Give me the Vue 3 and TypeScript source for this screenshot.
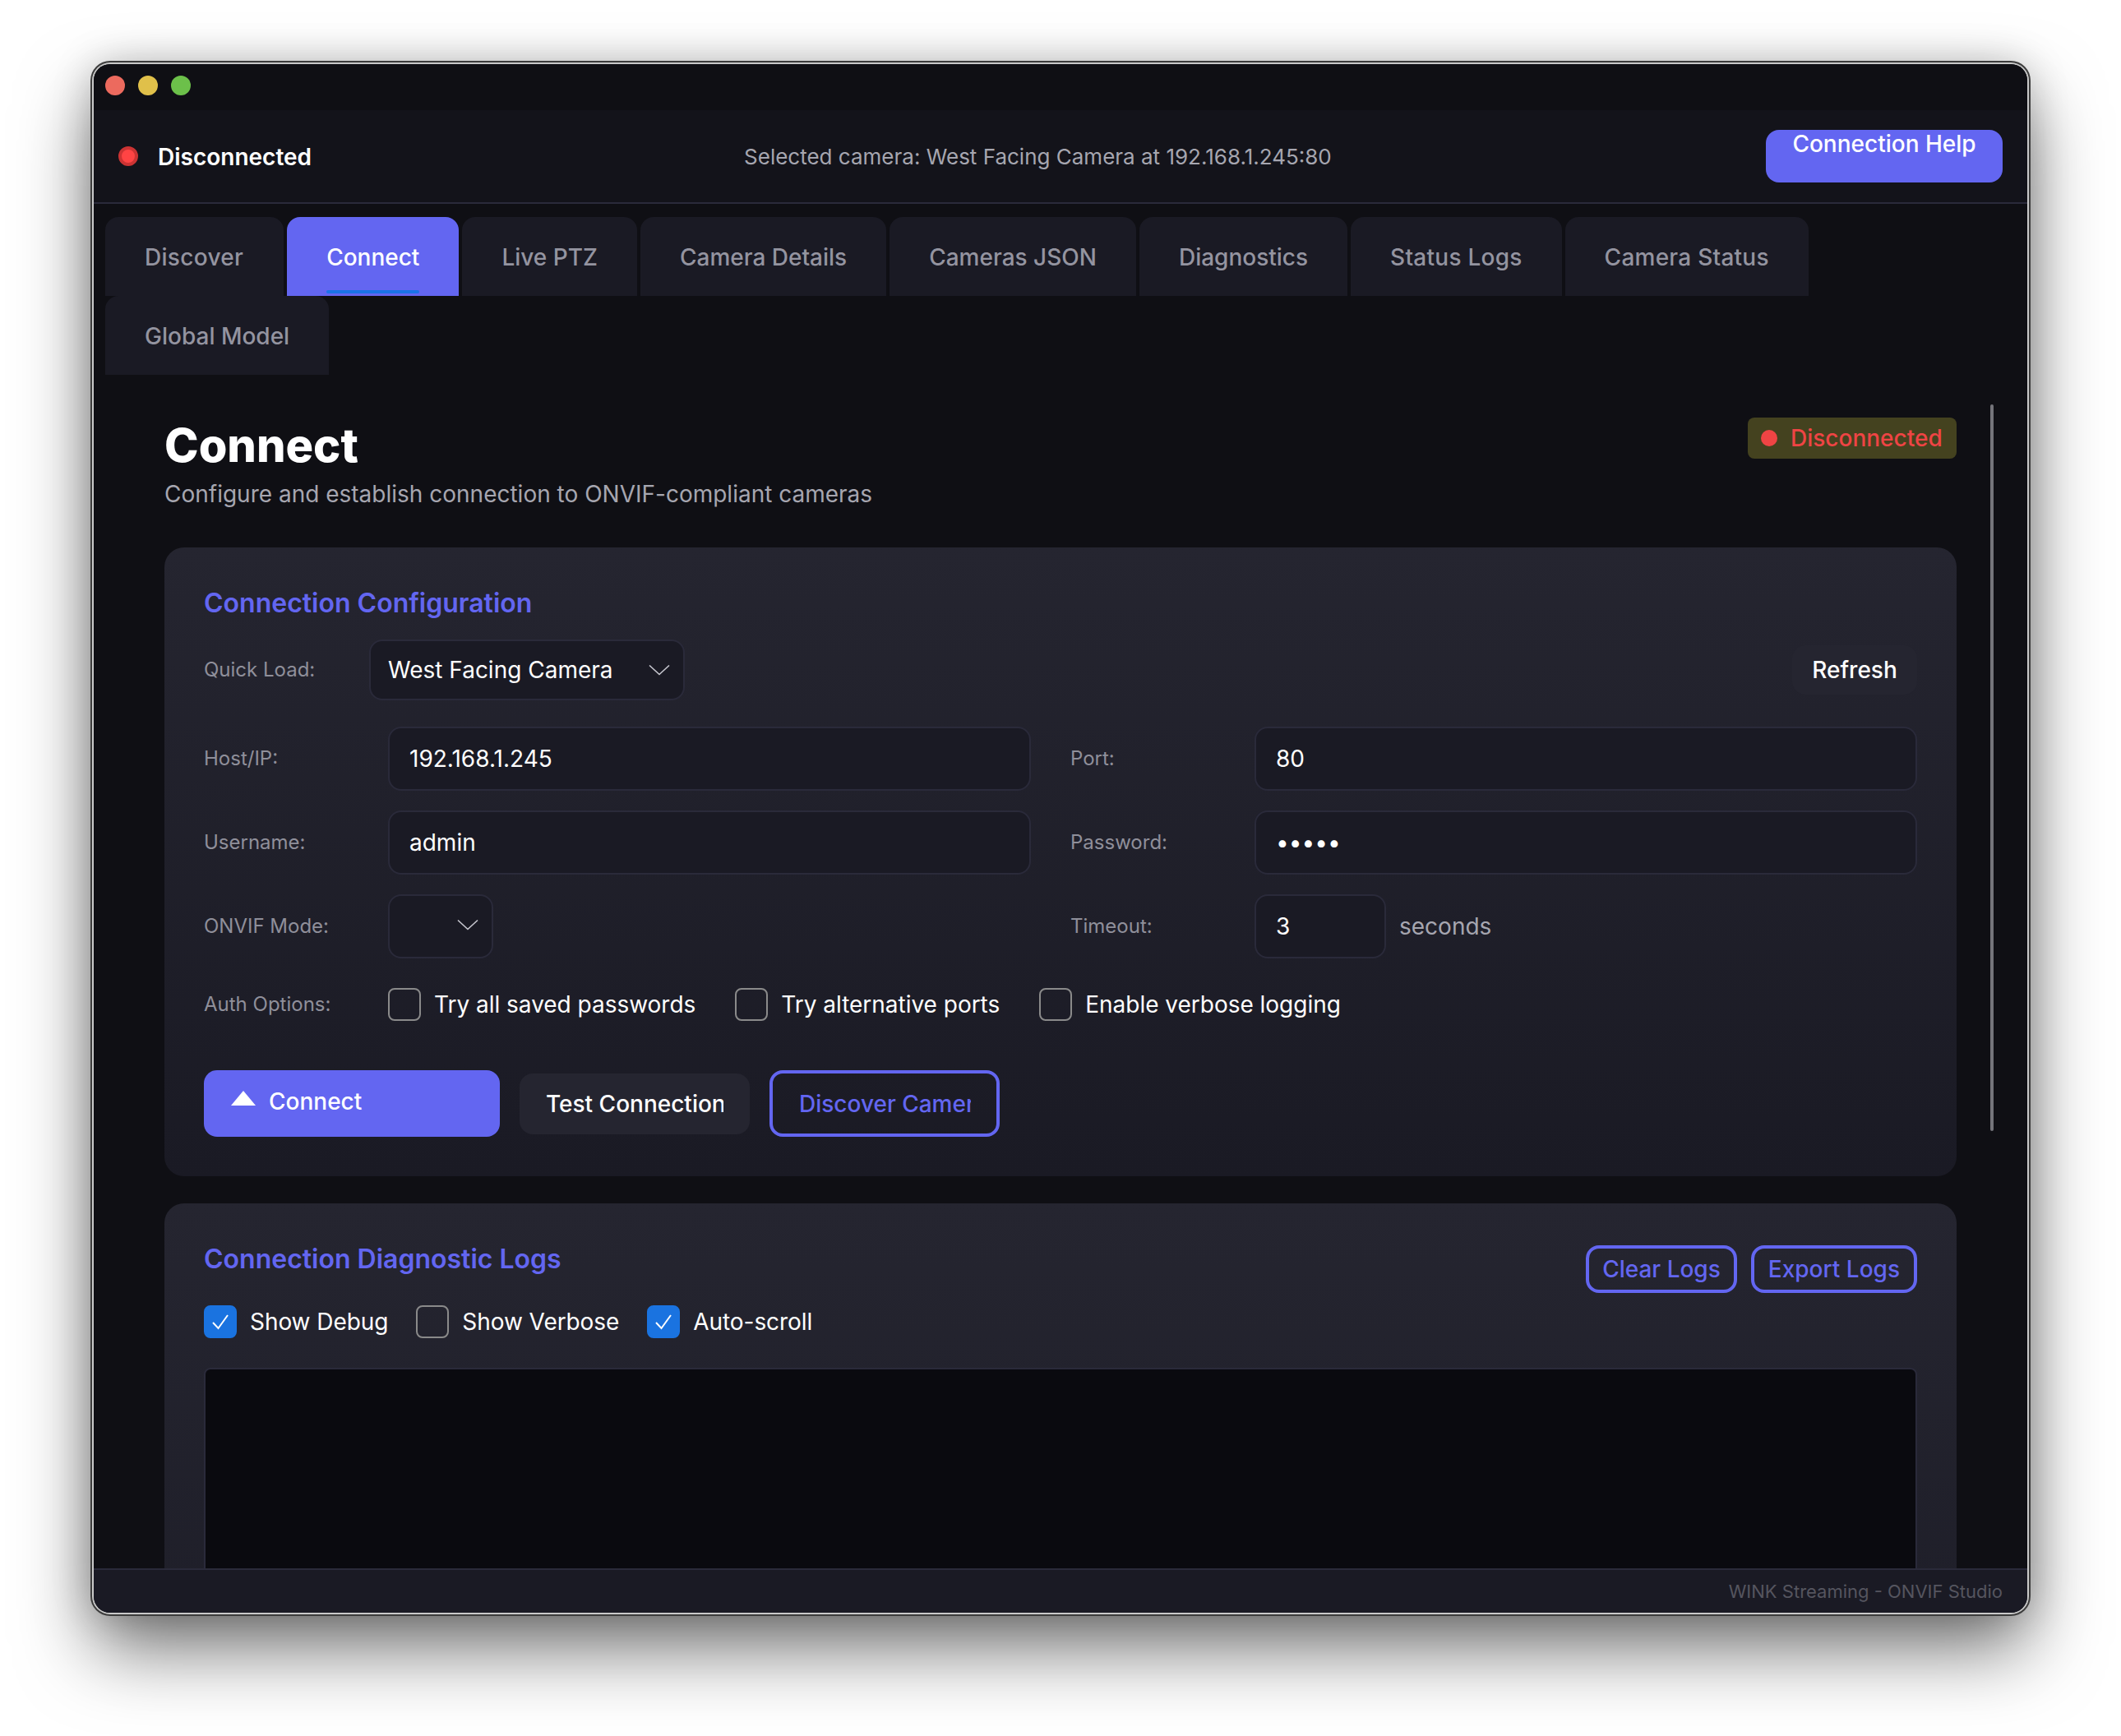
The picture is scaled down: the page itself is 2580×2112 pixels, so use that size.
<script setup lang="ts">
const tabs: string[] = ['Discover', 'Connect', 'Live PTZ', 'Camera Details', 'Cameras JSON', 'Diagnostics', 'Status Logs', 'Camera Status', 'Global Model']
const authOptions: string[] = ['Try all saved passwords', 'Try alternative ports', 'Enable verbose logging']
const logOptions = [
  { label: 'Show Debug', checked: true },
  { label: 'Show Verbose', checked: false },
  { label: 'Auto-scroll', checked: true },
]
</script>

<template>
  <div class="page">
    <div class="window">
      <div class="titlebar">
        <span class="light red"></span>
        <span class="light yellow"></span>
        <span class="light green"></span>
      </div>
      <header class="header">
        <div class="conn-state">
          <span class="state-dot"></span>
          <span class="state-text">Disconnected</span>
        </div>
        <div class="selected">Selected camera: West Facing Camera at 192.168.1.245:80</div>
        <button class="help-btn">Connection Help</button>
      </header>
      <nav class="tabs">
        <div v-for="t in tabs" :key="t" class="tab" :class="{ active: t === 'Connect' }">
          <span class="tab-label">{{ t }}</span>
        </div>
      </nav>
      <main class="content">
        <div class="scrollbar"></div>
        <div class="page-head">
          <div>
            <h1 class="page-title">Connect</h1>
            <p class="page-sub">Configure and establish connection to ONVIF-compliant cameras</p>
          </div>
          <div class="badge"><span class="badge-dot"></span>Disconnected</div>
        </div>

        <section class="card config">
          <h2 class="card-title">Connection Configuration</h2>
          <div class="quick-row">
            <label class="label quick-label">Quick Load:</label>
            <div class="select quick-select">
              <span>West Facing Camera</span>
              <svg class="chev" width="26" height="14" viewBox="0 0 26 14"><path d="M1 1.5 L13 12.5 L25 1.5" fill="none" stroke="#c8c8d0" stroke-width="1.6"/></svg>
            </div>
            <button class="refresh">Refresh</button>
          </div>
          <div class="grid-row first">
            <div class="field"><label class="label">Host/IP:</label><input class="input" value="192.168.1.245" /></div>
            <div class="field"><label class="label">Port:</label><input class="input" value="80" /></div>
          </div>
          <div class="grid-row">
            <div class="field"><label class="label">Username:</label><input class="input" value="admin" /></div>
            <div class="field"><label class="label">Password:</label><input class="input" type="password" value="admin" /></div>
          </div>
          <div class="grid-row">
            <div class="field">
              <label class="label">ONVIF Mode:</label>
              <div class="select mode-select">
                <svg class="chev" width="26" height="14" viewBox="0 0 26 14"><path d="M1 1.5 L13 12.5 L25 1.5" fill="none" stroke="#c8c8d0" stroke-width="1.6"/></svg>
              </div>
            </div>
            <div class="field">
              <label class="label">Timeout:</label>
              <input class="input timeout" value="3" />
              <span class="unit">seconds</span>
            </div>
          </div>
          <div class="auth-row">
            <label class="label">Auth Options:</label>
            <div class="auth-opts">
              <div v-for="o in authOptions" :key="o" class="check-item">
                <span class="box"></span><span class="check-label">{{ o }}</span>
              </div>
            </div>
          </div>
          <div class="actions">
            <button class="btn-connect">
              <svg width="30" height="18" viewBox="0 0 30 18"><path d="M15 0 L30 18 H0 Z" fill="#fff"/></svg>
              <span>Connect</span>
            </button>
            <button class="btn-test"><span class="clip test-clip">Test Connection</span></button>
            <button class="btn-discover"><span class="clip disc-clip">Discover Cameras</span></button>
          </div>
        </section>

        <section class="card logs">
          <div class="logs-head">
            <h2 class="card-title">Connection Diagnostic Logs</h2>
            <div class="logs-btns">
              <button class="btn-outline">Clear Logs</button>
              <button class="btn-outline">Export Logs</button>
            </div>
          </div>
          <div class="log-opts">
            <div v-for="o in logOptions" :key="o.label" class="check-item">
              <span class="box" :class="{ on: o.checked }">
                <svg v-if="o.checked" width="24" height="24" viewBox="0 0 24 24"><path d="M3 13 L9.5 20 L21 4" fill="none" stroke="#fff" stroke-width="2"/></svg>
              </span>
              <span class="check-label tight">{{ o.label }}</span>
            </div>
          </div>
          <div class="log-box"></div>
        </section>
      </main>
      <footer class="footer">WINK Streaming - ONVIF Studio</footer>
    </div>
  </div>
</template>

<style>
html, body { margin: 0; background: #fff; }
</style>

<style scoped>
* { box-sizing: border-box; }
.page {
  width: 2580px;
  height: 2112px;
  padding: 78px 0 0 114px;
  font-family: Inter, "Liberation Sans", sans-serif;
  background: #fff;
  overflow: hidden;
}
.window {
  width: 2352px;
  height: 1884px;
  background: #0f0f14;
  border-radius: 20px;
  overflow: hidden;
  display: flex;
  flex-direction: column;
  box-shadow: 0 0 0 2px #c9c9c9, 0 0 0 4px #3c3c3c, 0 44px 90px rgba(0, 0, 0, 0.55), 0 0 50px rgba(0, 0, 0, 0.22);
}
.titlebar {
  height: 56px;
  flex: none;
  display: flex;
  align-items: center;
  gap: 16px;
  padding: 0 0 4px 14px;
  background: #0f0f14;
}
.light { width: 24px; height: 24px; border-radius: 50%; }
.red { background: #ec6a5e; }
.yellow { background: #e0c04a; }
.green { background: #6cc04a; }
.header {
  height: 114px;
  flex: none;
  display: flex;
  align-items: center;
  padding: 0 30px;
  background: #13131a;
  border-bottom: 2px solid #2a2a3a;
}
.conn-state { display: flex; align-items: center; gap: 24px; flex: none; }
.state-dot {
  width: 24px; height: 24px; border-radius: 50%;
  background: #ff4444;
  border: 4px solid #cc3333;
  flex: none;
}
.state-text { color: #fff; font-size: 28px; font-weight: 600; line-height: 36px; padding-top: 1px; }
.selected { color: #a6a6b0; font-size: 26px; margin: 0 auto 0 526px; }
.help-btn {
  width: 288px; height: 64px;
  padding: 0;
  border: none;
  border-radius: 16px;
  background: #6366f1;
  color: #fff;
  font: 500 28px/34px Inter, sans-serif;
  display: flex;
  justify-content: center;
  align-items: flex-start;
}
.tabs {
  flex: none;
  display: flex;
  flex-wrap: wrap;
  column-gap: 4px;
  padding: 16px 14px 0 14px;
  background: #0f0f14;
}
.tab {
  height: 96px;
  padding: 1px 48px 0;
  background: #1a1a24;
  color: #9494a0;
  border-radius: 16px 16px 0 0;
  font-size: 28px;
  font-weight: 500;
  display: flex;
  align-items: center;
}
.tab:nth-child(1) { letter-spacing: 0.3px; padding-right: 49px; }
.tab:nth-child(7), .tab:nth-child(8) { letter-spacing: 0.25px; }
.tab.active { background: #6366f1; color: #fff; }
.tab-label { position: relative; }
.tab.active .tab-label::after {
  content: "";
  position: absolute;
  left: 0; right: 0;
  top: 57px;
  height: 4px;
  border-radius: 2px;
  background: #1a73e8;
}
.content {
  position: relative;
  flex: 1;
  min-height: 0;
  overflow: hidden;
  padding: 52px 86px 0 86px;
}
.scrollbar {
  position: absolute;
  top: 36px;
  left: 2307px;
  width: 4px;
  height: 884px;
  background: #74747a;
  border-radius: 2px;
}
.page-head { display: flex; justify-content: space-between; align-items: flex-start; height: 158px; }
.page-title { margin: 0; color: #fff; font-size: 56px; font-weight: 800; line-height: 68px; }
.page-sub { margin: 8px 0 0; color: #a6a6b0; font-size: 28px; line-height: 34px; }
.badge {
  height: 50px;
  width: 254px;
  padding: 0 0 0 16px;
  background: #44421f;
  border-radius: 8px;
  color: #ef4444;
  font-size: 28px;
  font-weight: 500;
  display: flex;
  align-items: center;
  gap: 16px;
}
.badge-dot { width: 20px; height: 20px; background: #ef4444; border-radius: 50%; flex: none; }
.card {
  border-radius: 24px;
  padding: 48px;
  background: linear-gradient(180deg, #252530 0%, #1a1a24 100%);
}
.card-title { margin: 0; color: #6366f1; font-size: 32px; font-weight: 600; line-height: 40px; }
.label { color: #8f8f9a; font-size: 24px; line-height: 30px; }
.quick-row { display: flex; align-items: center; margin-top: 24px; }
.quick-label { width: 201px; flex: none; }
.select {
  height: 74px;
  border-radius: 16px;
  background: #1a1a24;
  border: 2px solid #2a2a3a;
  color: #fff;
  font-size: 28px;
  display: flex;
  align-items: center;
  justify-content: space-between;
}
.quick-select { width: 384px; padding: 0 16px 0 21px; }
.mode-select { width: 128px; height: 78px; justify-content: flex-end; padding: 0 16px 4px 0; }
.refresh {
  margin-left: auto;
  width: 152px;
  height: 60px;
  border: none;
  border-radius: 16px;
  background: #252530;
  color: #fff;
  font: 500 28px Inter, sans-serif;
  padding: 0;
}
.grid-row {
  display: grid;
  grid-template-columns: 1006px 1030px;
  column-gap: 48px;
  margin-top: 24px;
}
.grid-row.first { margin-top: 32px; }
.field { display: flex; align-items: center; }
.field .label { width: 224px; flex: none; }
.input {
  flex: 1;
  min-width: 0;
  height: 78px;
  border-radius: 16px;
  background: #1a1a24;
  border: 2px solid #2a2a3a;
  color: #fff;
  font: 400 28px Inter, sans-serif;
  padding: 0 24px;
  outline: none;
}
.input.timeout { flex: none; width: 160px; }
.unit { color: #a6a6b0; font-size: 28px; margin-left: 16px; }
.auth-row { display: flex; align-items: center; margin-top: 36px; }
.auth-row .label { width: 224px; flex: none; }
.auth-opts { display: flex; gap: 48px; }
.check-item { display: flex; align-items: center; gap: 16px; }
.box {
  width: 40px; height: 40px;
  border: 2px solid #8a8a8a;
  border-radius: 8px;
  flex: none;
  display: flex;
  align-items: center;
  justify-content: center;
}
.box.on { background: #1a73e0; border-color: #1a73e0; }
.check-label { color: #fff; font-size: 28px; letter-spacing: -0.02px; }
.check-label.tight { letter-spacing: -0.07px; }
.actions { display: flex; align-items: center; gap: 24px; margin-top: 60px; }
.btn-connect {
  width: 360px; height: 81px;
  border: none;
  border-radius: 16px;
  background: #6366f1;
  color: #fff;
  font: 500 28px Inter, sans-serif;
  display: flex;
  align-items: flex-start;
  gap: 16px;
  padding: 24px 0 0 33px;
}
.btn-connect svg { margin-top: 1px; }
.btn-connect span { margin-top: -3px; line-height: 34px; }
.btn-test {
  width: 280px; height: 74px;
  border: none;
  border-radius: 16px;
  background: #252530;
  color: #fff;
  font: 500 28px Inter, sans-serif;
  padding: 0 0 0 32px;
  text-align: left;
}
.btn-discover {
  width: 280px; height: 81px;
  border: 4px solid #6366f1;
  border-radius: 16px;
  background: transparent;
  color: #6366f1;
  font: 500 28px Inter, sans-serif;
  padding: 0 0 0 32px;
  text-align: left;
}
.clip { display: block; overflow: hidden; white-space: nowrap; }
.test-clip { width: 216px; }
.disc-clip { width: 209px; }
.logs { margin-top: 33px; height: 900px; }
.logs-head { display: flex; justify-content: space-between; align-items: flex-start; }
.logs-btns { display: flex; gap: 17px; margin-top: 3px; }
.btn-outline {
  height: 58px;
  padding: 0 16px;
  border: 4px solid #6366f1;
  border-radius: 16px;
  background: transparent;
  color: #6366f1;
  font: 500 28px Inter, sans-serif;
}
.btn-outline:last-child { padding: 0 17px; }
.log-opts { display: flex; gap: 34px; margin-top: 15px; }
.log-box {
  margin-top: 36px;
  height: 700px;
  background: #0a0a0f;
  border: 2px solid #2a2a3a;
  border-radius: 8px;
}
.footer {
  height: 54px;
  flex: none;
  background: #1a1a24;
  border-top: 2px solid #2a2a3a;
  color: #55555f;
  font-size: 22px;
  display: flex;
  align-items: center;
  justify-content: flex-end;
  padding-right: 30px;
}
</style>
